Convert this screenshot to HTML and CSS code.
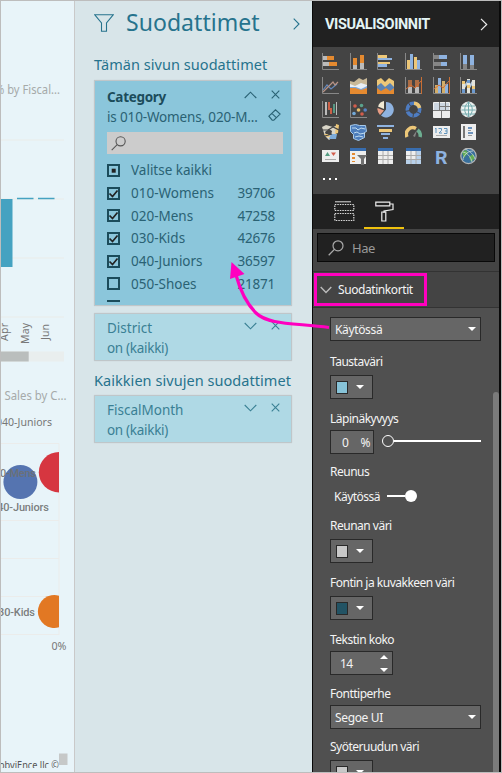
FILE: index.html
```
<!DOCTYPE html>
<html lang="fi">
<head>
<meta charset="utf-8">
<title>Suodattimet</title>
<link rel="stylesheet" href="styles.css">
</head>
<body>
<div class="app">
  <section class="report">
    <svg class="chart" width="73" height="771" viewBox="1 1 73 771">
      <g stroke="#e9eeee" stroke-width="1.5"><path d="M1 140H64M1 199H64M1 258H64M1 317H64"/></g>
      <text class="chart-title" x="-5" y="94" textLength="65" lengthAdjust="spacingAndGlyphs">% by Fiscal...</text>
      <path fill="#45a2c1" d="M1 199h11.5v68H1zM17 197.8h16.500v1.500H17zM38 197.800h16.500v1.500H38z"/>
      <text class="axis" transform="translate(7.500 341) rotate(-90)" textLength="18">Apr</text>
      <text class="axis" transform="translate(28.500 344) rotate(-90)" textLength="21">May</text>
      <text class="axis" transform="translate(49 340) rotate(-90)" textLength="16">Jun</text>
      <path fill="#e9eeee" d="M1 351.500h63v10H1z"/><path fill="#babebd" d="M1 351.500h27.700v10H1z"/>
      <text class="chart-title" x="4.500" y="400" textLength="62" lengthAdjust="spacingAndGlyphs">Sales by C...</text>
      <text class="legend" x="-4" y="426" textLength="56" lengthAdjust="spacingAndGlyphs">040-Juniors</text>
      <g stroke="#ebeceb" fill="none"><path d="M1 443.500H59V635M1 520.500H59M1 558.500H59M1 596.500H59M1 634.500H59"/></g>
      <path fill="#d63640" d="M59 452a20.200 20.200 0 0 0 0 40.400z"/>
      <circle cx="20.400" cy="482" r="17" fill="#5574b0"/>
      <path fill="#e27823" d="M59 595.800a16.400 16.400 0 1 0 0 31.400z"/>
      <text class="point" x="-6" y="477" textLength="42">20-Mens</text>
      <text class="point" x="-9" y="510.500" textLength="58">040-Juniors</text>
      <text class="point" x="-8" y="616" textLength="43">030-Kids</text>
      <text class="legend" x="51.500" y="650" textLength="15" lengthAdjust="spacingAndGlyphs">0%</text>
      <text class="credit" x="-1" y="769" textLength="60" lengthAdjust="spacingAndGlyphs">obviEnce llc ©</text>
      <path fill="#c6c8c8" d="M59 753.500h8.500V765H59z"/><path fill="#e8f4f9" d="M1 768h60v4H1z"/>
    </svg>
  </section>

  <section class="filters">
    <header class="filters-head">
      <svg width="20" height="18" viewBox="0 0 20 18"><path class="line" d="M.8.8h18.400L12.500 9v8.200h-5V9z"/></svg>
      <h1>Suodattimet</h1>
      <svg class="head-chev" width="7" height="12" viewBox="0 0 7 12"><path class="line" d="M.7.7 6 6 .7 11.300"/></svg>
    </header>
    <h2 class="page-heading">Tämän sivun suodattimet</h2>
    <article class="card open">
      <div class="card-row"><b>Category</b><span class="tools"><svg width="13" height="8" viewBox="0 0 13 8"><path class="line" d="M.7 7 6.500 1.200 12.300 7"/></svg><svg width="9" height="9" viewBox="0 0 9 9"><path class="line" d="m.7.7 7.600 7.600m0-7.600L.7 8.300"/></svg></span></div>
      <div class="card-row second"><span class="summary">is 010-Womens, 020-M...</span><svg width="13" height="12" viewBox="0 0 13 12"><path class="line" d="M.9 7.200 7.500.8l4.600 4.300-6.300 6.100H4.200zM3.900 4.300l4.600 4.500"/></svg></div>
      <div class="card-search"><svg width="15" height="15" viewBox="0 0 15 15"><circle class="line" cx="9.600" cy="5.300" r="4.600"/><path class="line" d="M6.200 8.700.7 14.200"/></svg></div>
      <ul>
        <li><i class="box"><svg width="13" height="13"><path d="M4.700 4.700h4v4h-4z"/></svg></i><span class="w-all">Valitse kaikki</span></li>
        <li><i class="box"><svg width="13" height="13"><path class="tick" d="m2.500 6.500 3 3 5-6"/></svg></i><span>010-Womens</span><em>39706</em></li>
        <li><i class="box"><svg width="13" height="13"><path class="tick" d="m2.500 6.500 3 3 5-6"/></svg></i><span>020-Mens</span><em>47258</em></li>
        <li><i class="box"><svg width="13" height="13"><path class="tick" d="m2.500 6.500 3 3 5-6"/></svg></i><span>030-Kids</span><em>42676</em></li>
        <li><i class="box"><svg width="13" height="13"><path class="tick" d="m2.500 6.500 3 3 5-6"/></svg></i><span>040-Juniors</span><em>36597</em></li>
        <li><i class="box"></i><span>050-Shoes</span><em>21871</em></li>
        <li><i class="box"></i></li>
      </ul>
    </article>
    <article class="card closed district">
      <div class="card-row"><span class="name">District</span><span class="tools"><svg width="13" height="8" viewBox="0 0 13 8"><path class="line" d="M.7 1 6.500 6.800 12.300 1"/></svg><svg width="9" height="9" viewBox="0 0 9 9"><path class="line" d="m.7.7 7.600 7.600m0-7.600L.7 8.300"/></svg></span></div>
      <div class="card-row state">on (kaikki)</div>
    </article>
    <h2 class="all-heading">Kaikkien sivujen suodattimet</h2>
    <article class="card closed">
      <div class="card-row"><span class="name">FiscalMonth</span><span class="tools"><svg width="13" height="8" viewBox="0 0 13 8"><path class="line" d="M.7 1 6.500 6.800 12.300 1"/></svg><svg width="9" height="9" viewBox="0 0 9 9"><path class="line" d="m.7.7 7.600 7.600m0-7.600L.7 8.300"/></svg></span></div>
      <div class="card-row state">on (kaikki)</div>
    </article>
  </section>

  <section class="visuals">
    <header class="vis-head"><h3>VISUALISOINNIT</h3><svg width="8" height="13" viewBox="0 0 8 13"><path class="white-line" d="M1 .8 6.700 6.500 1 12.200"/></svg></header>
    <div class="gallery">
      <svg viewBox="0 0 17 17"><path fill="#e58a30" d="M5 3h7v4H5zM7 9h8v4H7z"/><path fill="#bbb" d="M1 3h4v4H1zM1 9h6v4H1z"/><path class="axes" d="M.5 0v16.500H17"/></svg>
      <svg viewBox="0 0 17 17"><path fill="#e58a30" d="M3 5h4v7H3zM10 2h4v8h-4z"/><path fill="#bbb" d="M3 12h4v4H3zM10 10h4v6h-4z"/><path class="axes" d="M.5 0v16.500H17"/></svg>
      <svg viewBox="0 0 17 17"><path fill="#edc778" d="M1 2h9v3H1zM1 9h12v2H1z"/><path fill="#8fb3e0" d="M1 5h14v2H1zM1 11h9v3H1z"/><path class="axes" d="M.5 0v16.500H17"/></svg>
      <svg viewBox="0 0 17 17"><path fill="#edc778" d="M2 7h3v9H2zM9 4h3v12H9z"/><path fill="#8fb3e0" d="M5 1h3v15H5zM12 7h3v9h-3z"/><path class="axes" d="M.5 0v16.500H17"/></svg>
      <svg viewBox="0 0 17 17"><path fill="#8fb3e0" d="M6 2h8v4H6zM8 9h6v4H8z"/><path fill="#858585" d="M1 2h5v4H1zM1 9h7v4H1z"/><path class="axes" d="M.5 0v16.500H17"/></svg>
      <svg viewBox="0 0 17 17"><path fill="#8fb3e0" d="M3 2h4v9H3zM10 2h4v10h-4z"/><path fill="#858585" d="M3 11h4v5H3zM10 12h4v4h-4z"/><path class="axes" d="M.5 0v16.500H17"/></svg>

      <svg viewBox="0 0 17 17"><path fill="none" stroke="#6489bd" stroke-width="1.200" d="m1 13 4-5 4 4 6-5"/><path fill="none" stroke="#b89386" stroke-width="1.200" d="m1 15 4-4 6-6 2 3 3-3"/><path class="axes" d="M.5 0v16.500H17"/></svg>
      <svg viewBox="0 0 17 17"><path fill="#c9b998" d="m0 4 4 1 5-4 4 2 4-2v8H0z"/><path fill="#e8eff5" d="m0 7 5 2 6-3 6 2v4H0z"/><path fill="#7da6d8" d="m0 10 6 0 5 2 6-3v4H0z"/><path fill="#e58a30" d="m0 11 5 0 6 2 6-2v6H0z"/></svg>
      <svg viewBox="0 0 17 17"><path fill="#edc778" d="M0 3 4 1l4 4 4-4 5 3v8H0z"/><path fill="#5b83b5" d="m0 9 4-3 4 4 5-4 4 4v4H0z"/><path fill="#e58a30" d="m0 11 4 3 5-3 4 3 4-3v6H0z"/></svg>
      <svg viewBox="0 0 17 17"><path fill="#bbb" d="M3 9h4v7H3zM10 8h4v8h-4z"/><path fill="#ad6d44" d="M3 3h4v7H3zM10 3h4v7h-4z"/><path stroke="#d56f35" fill="none" d="m1 12 5-4 4 3 6-7"/><path class="axes" d="M.5 0v16.500H17"/><path stroke="#c96e34" d="M16.500 0v17"/></svg>
      <svg viewBox="0 0 17 17"><path fill="#d4ae69" d="M2 8h3v8H2zM9 4h3v12H9z"/><path fill="#8fb3e0" d="M5 1h3v15H5zM12 7h3v9h-3z"/><path stroke="#d56f35" fill="none" d="m1 12 5-4 4 3 6-7"/><path class="axes" d="M.5 0v16.500H17"/><path stroke="#c96e34" d="M16.500 0v17"/></svg>
      <svg viewBox="0 0 17 17"><path fill="#e4e4dc" d="M2 4h3v12H2zM7 2h3v14H7zM12 3h3v13h-3z"/><path fill="#edc778" d="M2 4h3v3H2zM7 8h3v3H7zM12 9h3v3h-3z"/><path fill="#6e9bd0" d="M2 12h3v4H2zM7 3h3v3H7zM12 12h3v4h-3z"/><path fill="#b8cada" d="m5 7 2-3v4l-2 3zm5 0 2-3v4l-2 3z"/><path class="axes" d="M.5 0v16.500H17"/></svg>

      <svg viewBox="0 0 17 17"><path fill="#bbb" d="M3 1h2v13H3z"/><path fill="#cb6148" d="M6 1h2v8H6zM8 7h2v6H8z"/><path fill="#589884" d="M11 3h2v9h-2z"/><path stroke="#bbb" fill="none" d="M14.500 1v13"/><path class="axes" d="M.5 0v16.500H17"/></svg>
      <svg viewBox="0 0 17 17"><circle cx="5" cy="5" r="1.800" fill="#d35d4c"/><circle cx="11.500" cy="4.500" r="1.800" fill="#5aa28d"/><circle cx="8.500" cy="9" r="1.800" fill="#e8c06f"/><circle cx="15.200" cy="9" r="1.800" fill="#5683c4"/><circle cx="4" cy="12.500" r="1.800" fill="#73a9d8"/><circle cx="12" cy="13" r="1.800" fill="#d35d4c"/><path class="axes" d="M.5 0v16.500H17"/></svg>
      <svg viewBox="0 0 17 17"><path fill="#8fb3e0" d="M9 1a7.700 7.700 0 1 1-5 13.500l5-6z"/><path fill="#f1ead4" d="M7 0v8L1 5.500A8 8 0 0 1 7 0z"/><path fill="#e79c84" d="M.5 7 7 9.500 3 14A8 8 0 0 1 .5 7z"/></svg>
      <svg viewBox="0 0 17 17"><circle cx="8.500" cy="8.500" r="6.200" fill="none" stroke="#4e7cc1" stroke-width="3.600"/><path d="M9 2.300A6.200 6.200 0 0 1 14.600 7" fill="none" stroke="#edc778" stroke-width="3.600"/><path stroke="#444" d="m3 1 2.500 4M0 10.500l5-1M8 16l.500-4M12 11l4 2"/></svg>
      <svg viewBox="0 0 17 17"><path fill="#ccd6e1" stroke="#eee" d="M.5 1.500h16v15H.5z"/><path fill="#eee" d="M1 10h15v6H1z"/><path fill="none" stroke="#777" d="M0 9.500h17M6.500 1v8M12.500 1v8M12 5.500h5M6 5.500h6M8.500 10v7"/></svg>
      <svg viewBox="0 0 17 17"><circle cx="8.500" cy="8.500" r="7.500" fill="#edf3f1" stroke="#e9e9e9"/><path fill="none" stroke="#72a9ad" d="M2 5h13M1.500 9h14M2 13h13M8.500 1v15M8.500 1c-5 4-5 11 0 15 5-4 5-11 0-15"/></svg>

      <svg viewBox="0 0 17 17"><path fill="#d9d5c8" d="m0 3 4-2 7 2 5-2v5l-3 5-6 5-4-4z"/><path fill="#444" d="m3 8 4-3 3 2-1 4-5 0z"/><path fill="#7eacd9" d="m9 10 6 0-1 5H7z"/><path fill="#edc778" d="m14 0 3 1-1 8-3 1zM2 10l4 0 2 3-3 0z"/><path fill="none" stroke="#444" stroke-width="1.200" d="M0 6h6l5-3 6 3M3 12l7-2"/></svg>
      <svg viewBox="0 0 17 17"><path fill="#4d7dbb" stroke="#a8cbeb" d="m.5 1.500 5-1 4 1h6l1 6-2 1v5l-6 3-5-2v-4l-3-3z"/><path fill="none" stroke="#c0dcf0" d="M2 4h4l2 2 3-2 4 1M4 9l3-1 3 2 5-1M5 13l4-1 4 1"/></svg>
      <svg viewBox="0 0 17 17"><path fill="#8fb3e0" d="M0 1h17v2H0zM4 9h9v2H4zM6 13h5v2H6z"/><path fill="#edc778" d="M2 5h13v3H2z"/></svg>
      <svg viewBox="0 0 17 17"><path d="M2 13A6.500 6.500 0 0 1 11 4.500" fill="none" stroke="#edc778" stroke-width="3.500"/><path d="M12.500 6a6.500 6.500 0 0 1 2.500 7" fill="none" stroke="#6dae91" stroke-width="3.500"/><path fill="#858585" d="m12 6-2 7-2-1z"/></svg>
      <svg viewBox="0 0 17 17"><path fill="#ededed" d="M0 2h17v12H0z"/><path fill="none" stroke="#5f93bc" d="m2 5 1-1v5m2.500-4.500h3v2L6 9h3M11 4.500h3v5h-3m1-2.500h2"/><path stroke="#aaa" d="M3 11.500h11"/></svg>
      <svg viewBox="0 0 17 17"><path fill="#eee" d="M1 0h15v16H1z"/><path fill="#777" d="M3 2h2v12H3z"/><path fill="#6c93bd" d="M8 3h4v2H8zM8 8h5v2H8z"/><path stroke="#999" d="M8 6.500h3M8 11.500h4"/></svg>

      <svg viewBox="0 0 17 17"><path fill="#eee" d="M0 2h17v12H0z"/><path fill="#559d83" d="m3 8 2.500-4L8 8z"/><path fill="#d35d4c" d="M9 4.500h5L11.500 8z"/><path stroke="#aaa" d="M3 11.500h11"/></svg>
      <svg viewBox="0 0 17 17"><path fill="#eee" d="M0 0h16v16H0z"/><path fill="#386daf" d="M0 0h16v3H0z"/><path fill="#e58a30" d="M2 5h3v2H2zM2 9h3v2H2zM2 13h3v1H2z"/><path fill="#707070" d="M7 7h10l-3 4v6h-3v-6z"/></svg>
      <svg viewBox="0 0 17 17"><path fill="#eee" d="M1 0h15v16H1z"/><path fill="#386daf" d="M1 0h15v3H1z"/><path fill="none" stroke="#aaa" d="M1 7.500h15M1 11.500h15M6 3v13M11 3v13"/></svg>
      <svg viewBox="0 0 17 17"><path fill="#eee" d="M1 0h15v16H1z"/><path fill="#386daf" d="M1 0h15v3H1z"/><path fill="#b8d1eb" d="M11 3h5v13h-5zM1 12h15v4H1z"/><path fill="none" stroke="#aaa" d="M1 7.500h15M1 11.500h15M6 3v13M11 3v13"/></svg>
      <svg viewBox="0 0 17 17"><text class="r-letter" x="2" y="15.500" textLength="12.500" lengthAdjust="spacingAndGlyphs">R</text></svg>
      <svg viewBox="0 0 17 17"><circle cx="8.500" cy="8" r="7.700" fill="#386f9c" stroke="#b6b6b6" stroke-width="1.200"/><path fill="#62ad52" d="m2 4 4-2 2 3-4 5zM9 9l4-3 2 4-4 4z"/><path fill="none" stroke="#c6d7d7" stroke-width=".8" d="M2 4c5 0 9 5 10 10M5 1c5 2 9 6 10 10M3 12c0-4 4-9 10-9"/></svg>
      <svg class="dots" viewBox="0 0 17 17"><path fill="#fff" d="M1 8h2v2H1zM7 8h2v2H7zM13 8h2v2h-2z"/></svg>
    </div>
    <nav class="tabs">
      <span class="tab"><svg width="21" height="21" viewBox="0 0 21 21"><path stroke="#ddd" d="M1 .8h16"/><path fill="none" stroke="#ddd" stroke-width="1.200" stroke-dasharray="1.500 1" d="M.8 3.500h19v6h-19zM.8 12.500h19v7h-19z"/></svg></span>
      <span class="tab active"><svg width="19" height="21" viewBox="0 0 19 21"><path fill="none" stroke="#eee" stroke-width="1.200" d="M.8 1.200h14v3.600H.8zM15 3h3v5.500l-9 1.500v2M6.800 11h4v9h-4z"/></svg></span>
    </nav>
    <div class="search-zone"><div class="search"><svg width="16" height="16" viewBox="0 0 16 16"><circle cx="10" cy="5.800" r="5" fill="none" stroke="#aaa" stroke-width="1.200"/><path stroke="#aaa" stroke-width="1.300" d="M6.400 9.400.7 15.300"/></svg><span>Hae</span></div></div>
    <div class="section"><svg width="12" height="8" viewBox="0 0 12 8"><path fill="none" stroke="#bbb" stroke-width="1.400" d="m.7 1 5.300 5.600L11.300 1"/></svg><span>Suodatinkortit</span></div>
    <div class="form">
      <div class="fields">
        <div class="control select first"><span>Käytössä</span><i class="down"></i></div>
        <div class="field tall"><label>Taustaväri</label><div class="control picker"><i class="swatch blue"></i><i class="down"></i></div></div>
        <div class="field opacity"><label>Läpinäkyvyys</label><div class="inline"><div class="control percent"><span>0</span><span>%</span></div><i class="knob"></i><i class="track"></i></div></div>
        <div class="field border-field"><label>Reunus</label><div class="toggle"><span>Käytössä</span><i class="bar"></i><i class="dot"></i></div></div>
        <div class="field tall"><label>Reunan väri</label><div class="control picker"><i class="swatch silver"></i><i class="down"></i></div></div>
        <div class="field tall"><label>Fontin ja kuvakkeen väri</label><div class="control picker"><i class="swatch teal"></i><i class="down"></i></div></div>
        <div class="field size"><label>Tekstin koko</label><div class="control stepper"><span>14</span><span class="arrows"><i class="up"></i><i class="down"></i></span></div></div>
        <div class="field family"><label>Fonttiperhe</label><div class="control select"><span>Segoe UI</span><i class="down"></i></div></div>
        <div class="field tall"><label>Syöteruudun väri</label><div class="control picker"><i class="swatch silver"></i><i class="down"></i></div></div>
      </div>
      <div class="scroll"></div>
    </div>
  </section>
</div>
<div class="callout-box"></div>
<svg class="callout-arrow" width="502" height="773" viewBox="0 0 502 773"><path fill="none" stroke="#ff00bf" stroke-width="3.200" d="M329 327.500 C296 323 268 325 256 313 C245 302 240 290 236 275"/><path fill="#ff00bf" d="m231.500 262 13 12-14.500 5z"/></svg>
</body>
</html>
```
FILE: styles.css
```
* { box-sizing: border-box; }
body { margin: 0; width: 502px; height: 773px; overflow: hidden; font-family: "Noto Sans", sans-serif; }
h1, h2, h3, ul { margin: 0; padding: 0; font-weight: 400; }
svg { display: block; flex: none; }
i, em { font-style: normal; }
.app { display: grid; grid-template-columns: 73px 238px 189px; width: 502px; height: 773px; border: 1px solid #bdbdbd; overflow: hidden; }

.report { background: #e8f4f9; overflow: hidden; }
.chart-title { font-size: 12px; fill: #a6aaa9; }
.axis { font-size: 10.5px; fill: #777; }
.legend { font-size: 10.5px; fill: #777; }
.point { font: 500 11px Roboto, sans-serif; fill: #6e706f; fill-opacity: .9; }
.credit { font-size: 10px; fill: #555; }

.filters { background: #d8e5e9; border-left: 1px solid #c9c9c9; padding: 0 20px 0 19px; color: #26738d; overflow: hidden; }
.line { fill: none; stroke: currentColor; stroke-width: 1.1; }
.filters-head { display: flex; align-items: center; height: 43px; margin-right: -8px; }
.filters-head h1 { margin-left: 12px; font-size: 23px; letter-spacing: .05px; line-height: 43px; }
.head-chev { margin-left: auto; margin-top: 3px; }
h2 { font-size: 14.5px; white-space: nowrap; line-height: 20px; }
.page-heading { margin-top: 10px; letter-spacing: .05px; }
.all-heading { margin-top: 9px; letter-spacing: .05px; }
.card { border: 1px solid #bfc6c9; width: 198px; padding: 0 16px 0 12px; border-radius: 1px; box-shadow: 0 0 1px #bbb; font-size: 13.5px; white-space: nowrap; }
.card-row { display: flex; align-items: center; justify-content: space-between; height: 20px; }
.tools { display: flex; align-items: center; gap: 14px; margin-right: -5px; }
.open { height: 226px; margin-top: 6px; padding-top: 6px; background: #8bc6db; color: #2a6274; overflow: hidden; }
.open b { color: #1b4c5b; letter-spacing: -.3px; }
.second { height: 19px; }
.second svg { margin-right: -6px; margin-top: -4px; }
.summary { letter-spacing: -.15px; }
.open .tools { margin-right: -5px; margin-top: -5px; }
.card-search { height: 22px; width: 176px; margin-top: 6px; padding: 4px; background: #ccc; color: #555; }
.open ul { list-style: none; height: 143px; margin-top: 5px; overflow: hidden; }
.open li { display: flex; align-items: center; height: 22.700px; }
.open li em { margin-left: auto; letter-spacing: -.2px; }
.box { width: 13px; height: 13px; margin-right: 11px; border: 2px solid #1b4c5b; }
.box svg { margin: -2px; fill: #222; }
.tick { fill: none; stroke: #222; stroke-width: 1.7; }
.closed { height: 48px; background: #afd9e5; padding-top: 4px; color: #3a8094; }
.closed .state { letter-spacing: -.3px; }
.district { margin-top: 7px; }
.all-heading + .card { margin-top: 5px; }
.closed .tools { margin-top: -5px; }

.visuals { border: solid #090909; border-width: 0 2px 0 1px; background: #444; color: #f4f4f4; display: flex; flex-direction: column; overflow: hidden; }
.vis-head { display: flex; flex: none; align-items: center; justify-content: space-between; height: 46px; padding: 0 11px 0 12px; background: #212121; color: #e4f5f5; }
.vis-head h3 { font: 700 14.5px Roboto, sans-serif; letter-spacing: -.4px; }
.white-line { fill: none; stroke: #eee; stroke-width: 1.2; }
.gallery { display: grid; flex: none; grid-template-columns: repeat(6, 17px); grid-auto-rows: 17px; column-gap: 10.700px; row-gap: 6.800px; height: 147px; padding: 6px 0 0 9px; }
.gallery svg { width: 17px; height: 17px; }
.axes { fill: none; stroke: #888; stroke-width: 1; }
.r-letter { font: 700 19px Roboto, sans-serif; fill: #8fb3e0; }
.gallery .dots { margin-top: -2px; }
.tabs { display: flex; flex: none; height: 35px; padding-left: 11px; background: #212121; }
.tab { width: 40px; display: flex; justify-content: center; padding-top: 7px; }
.tab.active { border-bottom: 2px solid #efc10e; }
.search-zone { flex: none; height: 43px; padding: 4px 4px 0; border-bottom: 1px solid #333; }
.search { display: flex; align-items: center; height: 29px; border: 1px solid #090909; background: #212121; padding-left: 10px; gap: 8px; color: #999; font-size: 13px; letter-spacing: -.5px; }
.section { display: flex; flex: none; align-items: center; gap: 6px; height: 36px; padding-left: 7px; border-bottom: 1px solid #333; font-size: 12px; letter-spacing: -.42px; }
.form { display: flex; flex: 1; min-height: 0; background: #505050; overflow: hidden; font-size: 12px; }
.fields { width: 180px; padding: 9px 0 0 17px; }
.scroll { width: 6px; margin-top: 84px; background: #7b7b7b; border-radius: 3px 3px 0 0; }
.field { white-space: nowrap; letter-spacing: -.5px; }
.field label { display: block; height: 18px; line-height: 19px; }
.tall { height: 57px; }
.opacity { height: 53px; }
.border-field, .size { height: 54px; }
.family { height: 53px; }
.control { display: flex; align-items: center; height: 24px; border: 1px solid #292929; background: #666; }
.field .control { margin-top: 3px; }
.tall .control { margin-top: 5px; }
.select { width: 151px; justify-content: space-between; padding: 0 4px; letter-spacing: -.35px; }
.first { margin-bottom: 11px; }
.down, .up { width: 0; height: 0; border: 4px solid transparent; border-bottom: 0; border-top-color: #fff; }
.up { border: 4px solid transparent; border-top: 0; border-bottom-color: #fff; }
.picker { width: 43px; padding-left: 5px; gap: 8px; }
.picker { margin-top: 4px; }
.swatch { width: 12px; height: 13px; border: 1px solid #292929; }
.blue { background: #87c3d8; }
.silver { background: #c8c8c8; }
.teal { background: #225364; }
.inline { display: flex; align-items: center; }
.percent { width: 44px; justify-content: space-between; padding: 0 3px 0 11px; }
.knob { width: 12px; height: 12px; margin-left: 8px; border: 1.500px solid #fff; border-radius: 50%; }
.track { width: 87px; height: 2px; background: #fff; }
.toggle { display: flex; align-items: center; height: 20px; margin-top: 6px; padding-left: 4px; }
.bar { width: 18px; height: 2px; margin-left: 7px; background: #fff; }
.dot { width: 12px; height: 12px; border-radius: 50%; background: #fff; }
.stepper { width: 63px; justify-content: space-between; padding: 0 4px 0 9px; }
.arrows { display: flex; flex-direction: column; gap: 9px; }

.callout-box { position: absolute; left: 314px; top: 273px; width: 113px; height: 33px; border: 3px solid #ff00bf; }
.callout-arrow { position: absolute; left: 0; top: 0; pointer-events: none; }
```
